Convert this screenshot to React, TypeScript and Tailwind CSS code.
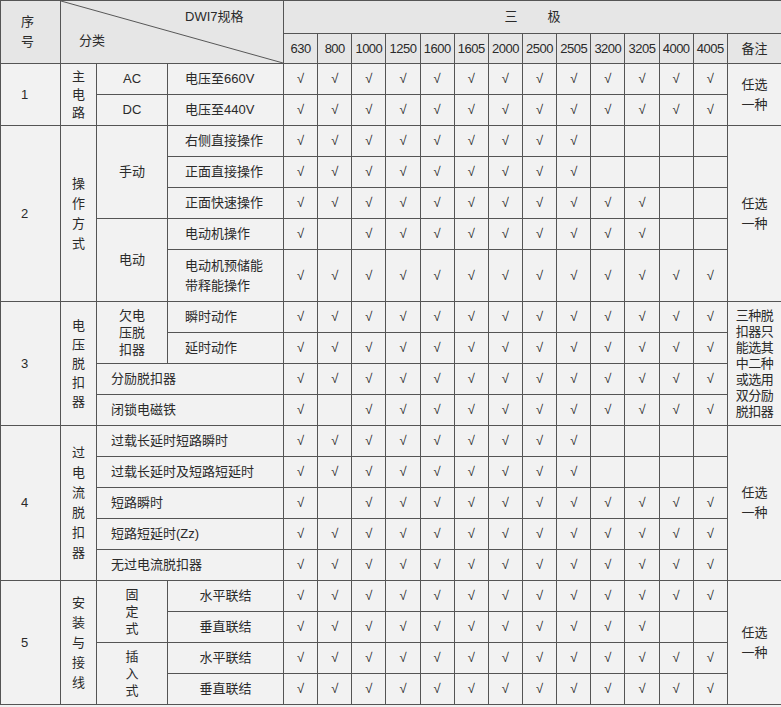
import React from 'react';

const sizes = ['630', '800', '1000', '1250', '1600', '1605', '2000', '2500', '2505', '3200', '3205', '4000', '4005'];

const all = sizes.map(() => true);
const upTo = (n: number) => sizes.map((_, i) => i < n);
const no800 = sizes.map((_, i) => i !== 1);
const no800upTo = (n: number) => sizes.map((_, i) => i !== 1 && i < n);

const td = 'border border-[#555] p-0 text-center align-middle';
const num = 'border border-[#555] p-0 text-left pl-[20px] align-middle';

function V({ text, lh = 'leading-[20px]' }: { text: string; lh?: string }) {
  return (
    <div className={`flex flex-col items-center ${lh}`}>
      {text.split('').map((c, i) => (
        <span key={i}>{c}</span>
      ))}
    </div>
  );
}

function Checks({ marks }: { marks: boolean[] }) {
  return (
    <>
      {marks.map((m, i) => (
        <td key={i} className={td}>
          {m ? '√' : ''}
        </td>
      ))}
    </>
  );
}

export default function App() {
  const h = 'h-[31px]';
  const label = `${td} text-left pl-[17px]`;
  return (
    <div className="w-[781px] h-[707px] overflow-hidden bg-[#f2f2f2] text-[#2a2a2a] text-[13px]" style={{ fontFamily: '"Liberation Sans", "Noto Sans CJK SC", sans-serif' }}>
      <table className="w-[781px] table-fixed border-collapse">
        <colgroup>
          <col className="w-[60px]" />
          <col className="w-[36px]" />
          <col className="w-[71px]" />
          <col className="w-[116px]" />
          {sizes.map((s) => (
            <col key={s} className="w-[34.15px]" />
          ))}
          <col className="w-[54px]" />
        </colgroup>
        <thead className="bg-[#e6e6e6]">
          <tr className="h-[33px]">
            <td rowSpan={2} className={`${num} leading-[20px]`}>
              序<br />号
            </td>
            <td rowSpan={2} colSpan={3} className={`${td} relative`}>
              <svg className="absolute inset-0 w-full h-full" viewBox="0 0 223 63" preserveAspectRatio="none">
                <line x1="0" y1="0" x2="223" y2="63" stroke="#555" strokeWidth="1" />
              </svg>
              <span className="absolute left-[124px] top-[6px]">DWI7规格</span>
              <span className="absolute left-[18px] top-[30px]">分类</span>
            </td>
            <td colSpan={14} className={td}>
              三<span className="inline-block w-[30px]" />极
            </td>
          </tr>
          <tr className="h-[30px]">
            {sizes.map((s) => (
              <td key={s} className={`${td} tracking-[-0.5px]`}>
                {s}
              </td>
            ))}
            <td className={td}>备注</td>
          </tr>
        </thead>
        <tbody>
          <tr className={h}>
            <td rowSpan={2} className={num}>1</td>
            <td rowSpan={2} className={td}><V text="主电路" lh="leading-[18px]" /></td>
            <td className={td}>AC</td>
            <td className={label}>电压至660V</td>
            <Checks marks={all} />
            <td rowSpan={2} className={`${td} leading-[20px]`}>任选<br />一种</td>
          </tr>
          <tr className={h}>
            <td className={td}>DC</td>
            <td className={label}>电压至440V</td>
            <Checks marks={all} />
          </tr>

          <tr className={h}>
            <td rowSpan={5} className={num}>2</td>
            <td rowSpan={5} className={td}><V text="操作方式" /></td>
            <td rowSpan={3} className={td}>手动</td>
            <td className={label}>右侧直接操作</td>
            <Checks marks={upTo(9)} />
            <td rowSpan={5} className={`${td} leading-[20px]`}>任选<br />一种</td>
          </tr>
          <tr className={h}>
            <td className={label}>正面直接操作</td>
            <Checks marks={upTo(9)} />
          </tr>
          <tr className={h}>
            <td className={label}>正面快速操作</td>
            <Checks marks={upTo(11)} />
          </tr>
          <tr className={h}>
            <td rowSpan={2} className={td}>电动</td>
            <td className={label}>电动机操作</td>
            <Checks marks={no800upTo(11)} />
          </tr>
          <tr className="h-[52px]">
            <td className={`${label} leading-[20px]`}>电动机预储能<br />带释能操作</td>
            <Checks marks={all} />
          </tr>

          <tr className={h}>
            <td rowSpan={4} className={num}>3</td>
            <td rowSpan={4} className={td}><V text="电压脱扣器" lh="leading-[19px]" /></td>
            <td rowSpan={2} className={`${td} leading-[17px]`}>欠电<br />压脱<br />扣器</td>
            <td className={label}>瞬时动作</td>
            <Checks marks={all} />
            <td rowSpan={4} className={`${td} leading-[16px] tracking-[-0.5px]`}>三种脱<br />扣器只<br />能选其<br />中二种<br />或选用<br />双分励<br />脱扣器</td>
          </tr>
          <tr className={h}>
            <td className={label}>延时动作</td>
            <Checks marks={all} />
          </tr>
          <tr className={h}>
            <td colSpan={2} className={`${td} text-left pl-[14px]`}>分励脱扣器</td>
            <Checks marks={all} />
          </tr>
          <tr className={h}>
            <td colSpan={2} className={`${td} text-left pl-[14px]`}>闭锁电磁铁</td>
            <Checks marks={no800} />
          </tr>

          <tr className={h}>
            <td rowSpan={5} className={num}>4</td>
            <td rowSpan={5} className={td}><V text="过电流脱扣器" /></td>
            <td colSpan={2} className={`${td} text-left pl-[14px]`}>过载长延时短路瞬时</td>
            <Checks marks={upTo(9)} />
            <td rowSpan={5} className={`${td} leading-[20px]`}>任选<br />一种</td>
          </tr>
          <tr className={h}>
            <td colSpan={2} className={`${td} text-left pl-[14px]`}>过载长延时及短路短延时</td>
            <Checks marks={upTo(9)} />
          </tr>
          <tr className={h}>
            <td colSpan={2} className={`${td} text-left pl-[14px]`}>短路瞬时</td>
            <Checks marks={no800} />
          </tr>
          <tr className={h}>
            <td colSpan={2} className={`${td} text-left pl-[14px]`}>短路短延时(Zz)</td>
            <Checks marks={all} />
          </tr>
          <tr className={h}>
            <td colSpan={2} className={`${td} text-left pl-[14px]`}>无过电流脱扣器</td>
            <Checks marks={all} />
          </tr>

          <tr className={h}>
            <td rowSpan={4} className={num}>5</td>
            <td rowSpan={4} className={td}><V text="安装与接线" /></td>
            <td rowSpan={2} className={td}><V text="固定式" lh="leading-[17px]" /></td>
            <td className={td}>水平联结</td>
            <Checks marks={all} />
            <td rowSpan={4} className={`${td} leading-[20px]`}>任选<br />一种</td>
          </tr>
          <tr className={h}>
            <td className={td}>垂直联结</td>
            <Checks marks={upTo(11)} />
          </tr>
          <tr className={h}>
            <td rowSpan={2} className={td}><V text="插入式" lh="leading-[17px]" /></td>
            <td className={td}>水平联结</td>
            <Checks marks={all} />
          </tr>
          <tr className={h}>
            <td className={td}>垂直联结</td>
            <Checks marks={all} />
          </tr>
        </tbody>
      </table>
    </div>
  );
}
